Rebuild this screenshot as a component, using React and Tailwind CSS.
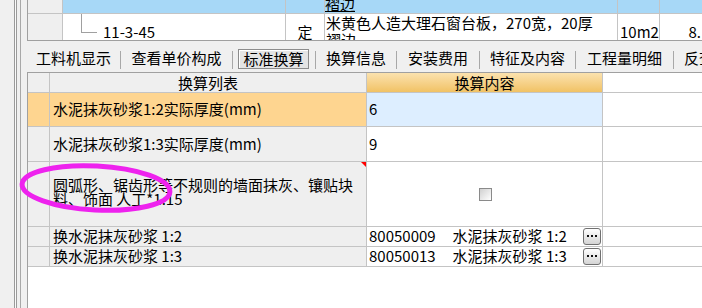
import React from 'react';

// 标准换算 panel, Glodon-style grid
const FONT = "font-['Noto_Sans_CJK_SC',sans-serif]";

const tabs = [
  { label: '工料机显示', w: 'w-[93px]' },
  { label: '查看单价构成', w: 'w-[111px]' },
  { label: '标准换算', w: 'w-[82px]', active: true },
  { label: '换算信息', w: 'w-[80px]' },
  { label: '安装费用', w: 'w-[82px]' },
  { label: '特征及内容', w: 'w-[95px]' },
  { label: '工程量明细', w: 'w-[97px]' },
];

const DotsButton = () => (
  <div className="w-[18px] h-[17px] rounded-[3px] border border-[#707070] bg-gradient-to-b from-white to-[#d4d4d4] flex items-center justify-center">
    <svg width="10" height="3" viewBox="0 0 10 3">
      <rect x="0" y="0" width="2" height="2" fill="#111" />
      <rect x="4" y="0" width="2" height="2" fill="#111" />
      <rect x="8" y="0" width="2" height="2" fill="#111" />
    </svg>
  </div>
);

const TopGrid = () => (
  <div className="h-[41px] border-l border-b border-[#a0a0a0] bg-white flex flex-col">
    {/* selected row (blue) */}
    <div className="flex h-[14px] border-b border-[#c4c4c4]">
      <div className="w-[35px] bg-[#efefef] border-r border-[#c4c4c4]" />
      <div className="w-[223px] bg-[#a7d8f7] border-r border-[#c4c4c4]" />
      <div className="w-[39px] bg-[#a7d8f7] border-r border-[#c4c4c4]" />
      <div className="w-[293px] bg-[#a7d8f7] border-r border-[#c4c4c4] overflow-hidden relative">
        <span className="absolute left-0 bottom-[1px] leading-[15px] border-b border-black">褶边</span>
      </div>
      <div className="w-[42px] bg-[#a7d8f7] border-r border-[#c4c4c4]" />
      <div className="flex-1 bg-[#a7d8f7]" />
    </div>
    <div className="flex h-[26px]">
      <div className="w-[35px] bg-[#efefef] border-r border-[#c4c4c4]" />
      <div className="w-[223px] border-r border-[#c4c4c4] relative">
        <div className="absolute left-[18px] top-0 h-[19px] w-[16px] border-l border-b border-[#a0a0a0]" />
        <span className="absolute left-[40px] bottom-[1px] leading-[15px]">11-3-45</span>
      </div>
      <div className="w-[39px] border-r border-[#c4c4c4] flex items-end justify-center pb-[1px] leading-[15px]">定</div>
      <div className="w-[293px] border-r border-[#c4c4c4] overflow-hidden leading-[17px] pl-[1px]">
        <div>米黄色人造大理石窗台板，270宽，20厚</div>
        <div>褶边</div>
      </div>
      <div className="w-[42px] border-r border-[#c4c4c4] flex items-end pl-[2px] pb-[1px] leading-[15px]">10m2</div>
      <div className="flex-1 flex items-end justify-end pr-[1px] pb-[1px] leading-[15px] overflow-hidden">8.</div>
    </div>
  </div>
);

const TabBar = () => (
  <div className="h-[31px] flex items-center overflow-hidden">
    {tabs.map((t) => (
      <React.Fragment key={t.label}>
        <div className={`${t.w} shrink-0 h-full flex items-center ${t.active ? 'pl-[5px]' : 'justify-center'}`}>
          {t.active ? (
            <div className="w-[71px] h-[20px] mt-[5px] border border-[#8c8c8c] bg-[#e4e4e4] shadow-[inset_1px_1px_0_#ffffff] flex items-center justify-center">
              {t.label}
            </div>
          ) : (
            <span className="mt-[4px] whitespace-nowrap">{t.label}</span>
          )}
        </div>
        <div className="w-px shrink-0 h-[18px] mt-[6px] bg-[#a8a8a8]" />
      </React.Fragment>
    ))}
    <span className="ml-[10px] mt-[4px] shrink-0 whitespace-nowrap">反查</span>
  </div>
);

const rows = [
  { h: 'h-[34px]', left: '水泥抹灰砂浆1:2实际厚度(mm)', right: '6', selected: true },
  { h: 'h-[35px]', left: '水泥抹灰砂浆1:3实际厚度(mm)', right: '9' },
];

const Grid = () => (
  <div className="flex-1 bg-white border-l border-t border-[#a0a0a0]">
    {/* header */}
    <div className="flex h-[20px] border-b border-[#c4c4c4]">
      <div className="w-[22px] bg-[#efefef] border-r border-[#c4c4c4]" />
      <div className="w-[317px] bg-[#efefef] border-r border-[#c4c4c4] flex items-center justify-center leading-none">换算列表</div>
      <div className="w-[236px] bg-gradient-to-b from-[#fbe2ae] to-[#f1c264] border-r border-[#c4c4c4] flex items-center justify-center leading-none">换算内容</div>
    </div>
    {rows.map((r) => (
      <div key={r.left} className={`flex ${r.h} border-b border-[#c4c4c4]`}>
        <div className={`w-[22px] border-r border-[#c4c4c4] ${r.selected ? 'bg-[#fed590]' : 'bg-[#efefef]'}`} />
        <div className={`w-[317px] border-r border-[#c4c4c4] flex items-center pl-[3px] ${r.selected ? 'bg-[#fed590]' : 'bg-[#efefef]'}`}>{r.left}</div>
        <div className={`w-[236px] border-r border-[#c4c4c4] flex items-center pl-[2px] ${r.selected ? 'bg-[#ddeeff]' : 'bg-white'}`}>{r.right}</div>
      </div>
    ))}
    {/* wrapped row with checkbox */}
    <div className="flex h-[65px] border-b border-[#c4c4c4]">
      <div className="w-[22px] bg-[#efefef] border-r border-[#c4c4c4]" />
      <div className="w-[317px] bg-[#efefef] border-r border-[#c4c4c4] flex flex-col justify-center pl-[3px] pb-[4px] leading-[14px] relative">
        <div>圆弧形、锯齿形等不规则的墙面抹灰、镶贴块</div>
        <div>料、饰面 人工*1.15</div>
        <svg className="absolute right-0 top-0" width="5" height="5" viewBox="0 0 5 5">
          <polygon points="0,0 5,0 5,5" fill="#ff0000" />
        </svg>
      </div>
      <div className="w-[236px] border-r border-[#c4c4c4] flex items-center justify-center">
        <div className="w-[13px] h-[13px] border border-[#8a8a8a] bg-gradient-to-br from-[#d0d0d0] to-white ml-[2px]" />
      </div>
    </div>
    {[
      ['换水泥抹灰砂浆 1:2', '80050009', '水泥抹灰砂浆 1:2'],
      ['换水泥抹灰砂浆 1:3', '80050013', '水泥抹灰砂浆 1:3'],
    ].map(([l, code, name]) => (
      <div key={code} className="flex h-[20px] border-b border-[#c4c4c4]">
        <div className="w-[22px] bg-[#efefef] border-r border-[#c4c4c4]" />
        <div className="w-[317px] bg-[#efefef] border-r border-[#c4c4c4] flex items-center pl-[3px] whitespace-pre">{l}</div>
        <div className="w-[236px] border-r border-[#c4c4c4] flex items-center pl-[2px] pr-[1px] whitespace-pre">
          <span>{code}</span>
          <span className="ml-[17px]">{name}</span>
          <div className="ml-auto">
            <DotsButton />
          </div>
        </div>
      </div>
    ))}
  </div>
);

export default function App() {
  return (
    <div className={`w-[702px] h-[308px] bg-[#f0f0f0] flex overflow-hidden relative text-[15px] text-black ${FONT}`}>
      {/* left frame edges */}
      <div className="w-[14px]" />
      <div className="w-px bg-[#9a9a9a]" />
      <div className="w-px bg-[#fafafa]" />
      <div className="w-px bg-[#9a9a9a]" />
      <div className="w-[3px]" />
      <div className="w-px bg-[#a8a8a8]" />
      <div className="w-[6px]" />
      <div className="flex-1 flex flex-col min-w-0">
        <TopGrid />
        <TabBar />
        <Grid />
      </div>
      {/* hand-drawn annotation */}
      <svg className="absolute left-0 top-0 pointer-events-none" width="702" height="308">
        <ellipse cx="96" cy="188" rx="74" ry="22" fill="none" stroke="#ee22ee" strokeWidth="5" transform="rotate(3 96 188)" />
      </svg>
    </div>
  );
}
